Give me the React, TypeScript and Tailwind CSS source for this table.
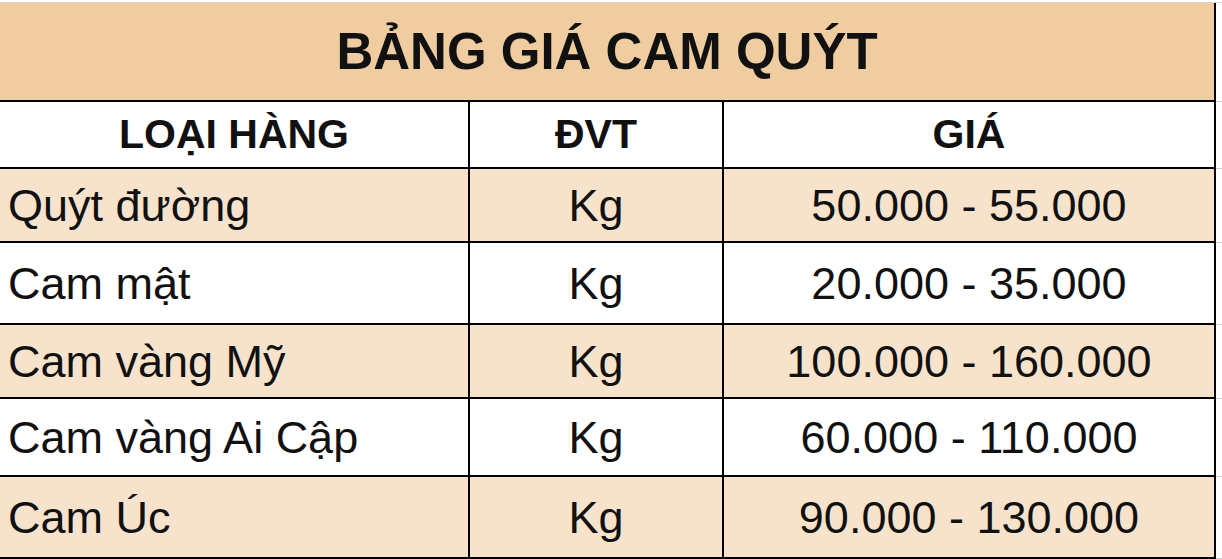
const rows = [
  { name: "Quýt đường", unit: "Kg", price: "50.000 - 55.000", h: "h-[74px]", shade: true },
  { name: "Cam mật", unit: "Kg", price: "20.000 - 35.000", h: "h-[82px]", shade: false },
  { name: "Cam vàng Mỹ", unit: "Kg", price: "100.000 - 160.000", h: "h-[74px]", shade: true },
  { name: "Cam vàng Ai Cập", unit: "Kg", price: "60.000 - 110.000", h: "h-[78px]", shade: false },
  { name: "Cam Úc", unit: "Kg", price: "90.000 - 130.000", h: "h-[82px]", shade: true },
];

export default function App() {
  return (
    <div className="h-[559px] w-[1222px] overflow-hidden bg-white text-[#111] [font-family:'Liberation_Sans',Arial,sans-serif]">
      <div className="h-[3px] border-b border-[#d6d6d6]" />

      <div className="flex h-[99px]">
        <div className="flex w-[1216px] items-center justify-center border-b-2 border-r-2 border-black bg-[#f0cca1] text-[51px] font-bold leading-none">
          BẢNG GIÁ CAM QUÝT
        </div>
        <div className="flex-1 border-b border-[#d0d0d0]" />
      </div>

      <div className="flex h-[67px] text-[41px] font-bold leading-none">
        <div className="flex w-[470px] items-center justify-center border-b-2 border-r-2 border-black">LOẠI HÀNG</div>
        <div className="flex w-[254px] items-center justify-center border-b-2 border-r-2 border-black">ĐVT</div>
        <div className="flex w-[492px] items-center justify-center border-b-2 border-r-2 border-black">GIÁ</div>
        <div className="flex-1 border-b border-[#d0d0d0]" />
      </div>

      {rows.map((r) => (
        <div key={r.name} className={`flex ${r.h} text-[45px] leading-none`}>
          <div className={`flex w-[470px] items-center border-b-2 border-r-2 border-black pl-2 ${r.shade ? "bg-[#f7e3cc]" : "bg-white"}`}>
            {r.name}
          </div>
          <div className={`flex w-[254px] items-center justify-center border-b-2 border-r-2 border-black ${r.shade ? "bg-[#f7e3cc]" : "bg-white"}`}>
            {r.unit}
          </div>
          <div className={`flex w-[492px] items-center justify-center border-b-2 border-r-2 border-black ${r.shade ? "bg-[#f7e3cc]" : "bg-white"}`}>
            {r.price}
          </div>
          <div className="flex-1 border-b border-[#d0d0d0]" />
        </div>
      ))}
    </div>
  );
}
